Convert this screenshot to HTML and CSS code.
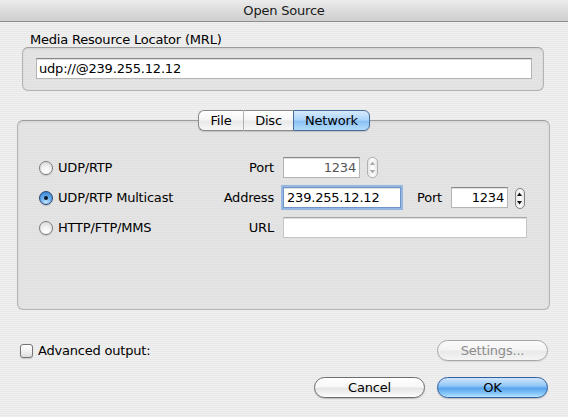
FILE: index.html
```html
<!DOCTYPE html>
<html>
<head>
<meta charset="utf-8">
<title>Open Source</title>
<link rel="stylesheet" href="styles.css">
</head>
<body>
<div class="window">
  <div class="titlebar">Open Source</div>
  <div class="content">
    <div class="mrl-label">Media Resource Locator (MRL)</div>
    <div class="groupbox mrl-box">
      <div class="field mrl-field">udp://@239.255.12.12</div>
    </div>

    <div class="tabview">
      <div class="tabs">
        <span class="tab tab-file">File</span><span class="tab tab-disc">Disc</span><span class="tab tab-net selected">Network</span>
      </div>
      <div class="groupbox tab-box">
        <div class="row">
          <label class="radio-item"><span class="radio"></span>UDP/RTP</label>
          <span class="flabel">Port</span>
          <span class="field num port1 disabled">1234</span>
          <span class="stepper disabled"><svg width="7" height="15" viewBox="0 0 7 15"><path d="M3.5 1.5 L6 5 L1 5 Z"/><path d="M3.5 13.5 L6 10 L1 10 Z"/></svg></span>
        </div>
        <div class="row">
          <label class="radio-item"><span class="radio checked"></span>UDP/RTP Multicast</label>
          <span class="flabel">Address</span>
          <span class="field focused address">239.255.12.12</span>
          <span class="flabel port2-label">Port</span>
          <span class="field num port2">1234</span>
          <span class="stepper"><svg width="7" height="15" viewBox="0 0 7 15"><path d="M3.5 1.5 L6 5 L1 5 Z"/><path d="M3.5 13.5 L6 10 L1 10 Z"/></svg></span>
        </div>
        <div class="row">
          <label class="radio-item"><span class="radio"></span>HTTP/FTP/MMS</label>
          <span class="flabel">URL</span>
          <span class="field url disabled"></span>
        </div>
      </div>
    </div>

    <div class="bottom-row">
      <label class="check-item"><span class="checkbox"></span>Advanced output:</label>
      <span class="button disabled-btn">Settings...</span>
    </div>
    <div class="buttons-row">
      <span class="button">Cancel</span>
      <span class="button default">OK</span>
    </div>
  </div>
</div>
</body>
</html>
```

FILE: styles.css
```css
html, body {
  margin: 0;
  padding: 0;
}
body {
  width: 568px;
  height: 417px;
  overflow: hidden;
  font-family: "DejaVu Sans", "Liberation Sans", sans-serif;
  font-size: 13px;
  letter-spacing: -0.2px;
  color: #000;
}
.window {
  width: 568px;
  height: 417px;
  background: repeating-linear-gradient(180deg, #efefef 0 1px, #e9e9e9 1px 2px);
}
.titlebar {
  height: 21px;
  border-bottom: 1px solid #8e8e8e;
  background: linear-gradient(180deg, #ececec 0%, #dcdcdc 50%, #cfcfcf 100%);
  text-align: center;
  line-height: 22px;
  color: #1a1a1a;
}
.content {
  display: flex;
  flex-direction: column;
}
.mrl-label {
  margin: 10px 0 0 30px;
  height: 15px;
  line-height: 15px;
}
.groupbox {
  border: 1px solid #b3b3b3;
  border-top-color: #9c9c9c;
  border-radius: 6px;
  background: repeating-linear-gradient(180deg, #e5e5e5 0 1px, #e0e0e0 1px 2px);
  box-shadow: inset 0 1px 2px rgba(0,0,0,0.08);
}
.mrl-box {
  margin: 0 24px 0 22px;
  padding: 10px 11px 0 13px;
  box-sizing: border-box;
  height: 44px;
}
.field {
  box-sizing: border-box;
  height: 21px;
  background: #fff;
  border: 1px solid #b4b4b4;
  border-top-color: #888;
  box-shadow: inset 0 1px 0 #dedede;
  line-height: 19px;
  padding: 0 3px;
  white-space: nowrap;
}
.mrl-field {
  padding-left: 2px;
}
.tabview {
  display: flex;
  flex-direction: column;
  margin-top: 19px;
}
.tabs {
  display: flex;
  position: relative;
  z-index: 2;
  height: 21px;
  margin-left: 198px;
  width: 172px;
  box-shadow: 0 1px 1px rgba(0,0,0,0.15);
  border-radius: 6px;
}
.tab {
  box-sizing: border-box;
  height: 21px;
  line-height: 19px;
  text-align: center;
  border: 1px solid #8a8a8a;
  background: linear-gradient(180deg, #ffffff 0%, #f6f6f6 45%, #e9e9e9 55%, #f7f7f7 100%);
}
.tab-file {
  width: 46px;
  border-radius: 6px 0 0 6px;
  border-right: 1px solid #b0b0b0;
}
.tab-disc {
  width: 49px;
  border-left: none;
  border-right: none;
}
.tab-net {
  width: 77px;
  border-radius: 0 6px 6px 0;
}
.tab.selected {
  border-color: #476a9a;
  background: linear-gradient(180deg, #d6eafd 0%, #aed5fa 45%, #8ac2f4 55%, #b4dcfc 100%);
}
.tab-box {
  margin: -11px 18px 0 17px;
  height: 190px;
  box-sizing: border-box;
  padding: 36px 0 0 21px;
  display: flex;
  flex-direction: column;
  gap: 9px;
  position: relative;
  z-index: 1;
}
.row {
  display: flex;
  align-items: center;
  height: 21px;
}
.radio-item {
  width: 170px;
  display: flex;
  align-items: center;
  gap: 5px;
}
.radio {
  width: 14px;
  height: 14px;
  box-sizing: border-box;
  border-radius: 50%;
  border: 1px solid #7d7d7d;
  background: radial-gradient(circle at 50% 80%, #ffffff 0%, #f3f3f3 40%, #d2d2d2 100%);
  box-shadow: 0 1px 1px rgba(0,0,0,0.15);
  position: relative;
}
.radio.checked {
  border-color: #26466f;
  background: radial-gradient(circle at 50% 85%, #c4e4ff 0%, #69aef0 45%, #2f76c8 100%);
}
.radio.checked::after {
  content: "";
  position: absolute;
  left: 4px;
  top: 4px;
  width: 4px;
  height: 4px;
  border-radius: 50%;
  background: #0c1626;
}
.flabel {
  width: 65px;
  text-align: right;
  margin-right: 9px;
}
.num {
  text-align: right;
}
.port1 {
  width: 77px;
  color: #555;
}
.address {
  width: 118px;
}
.focused {
  border-color: #6f94c5;
  box-shadow: 0 0 0 2px #95b8e2, inset 0 1px 0 #e0e0e0;
}
.port2-label {
  width: auto;
  margin-left: 16px;
  margin-right: 9px;
}
.port2 {
  width: 57px;
}
.url {
  width: 244px;
  border-color: #c6c6c6;
  border-top-color: #a8a8a8;
}
.stepper {
  box-sizing: border-box;
  width: 11px;
  height: 21px;
  margin-left: 7px;
  border: 1px solid #828282;
  border-radius: 5px;
  background: linear-gradient(90deg, #e6e6e6 0%, #ffffff 50%, #e6e6e6 100%);
  display: flex;
  align-items: center;
  justify-content: center;
  margin-top: -1px;
}
.stepper svg {
  display: block;
  fill: #111;
}
.stepper.disabled {
  border-color: #b0b0b0;
}
.stepper.disabled svg {
  fill: #a8a8a8;
}
.port2 + .stepper {
  margin-left: 7px;
  width: 10px;
  margin-top: 1px;
}
.bottom-row {
  display: flex;
  justify-content: space-between;
  align-items: center;
  margin-top: 30px;
  padding: 0 20px 0 20px;
  height: 21px;
}
.check-item {
  display: flex;
  align-items: center;
  gap: 5px;
}
.checkbox {
  width: 13px;
  height: 14px;
  box-sizing: border-box;
  border: 1px solid #757575;
  border-radius: 3px;
  background: linear-gradient(180deg, #ffffff 0%, #f2f2f2 50%, #dcdcdc 100%);
  box-shadow: 0 1px 1px rgba(0,0,0,0.15);
}
.buttons-row {
  display: flex;
  justify-content: flex-end;
  gap: 12px;
  margin-top: 16px;
  padding-right: 20px;
}
.button {
  box-sizing: border-box;
  width: 111px;
  height: 21px;
  line-height: 19px;
  text-align: center;
  border: 1px solid #6c6c6c;
  border-radius: 11px;
  background: linear-gradient(180deg, #ffffff 0%, #f7f7f7 45%, #e6e6e6 55%, #f4f4f4 85%, #ffffff 100%);
  box-shadow: 0 1px 1px rgba(0,0,0,0.2);
}
.disabled-btn {
  color: #8c8c8c;
  border-color: #a6a6a6;
  background: linear-gradient(180deg, #fbfbfb 0%, #f4f4f4 45%, #eaeaea 55%, #f4f4f4 100%);
  box-shadow: 0 1px 1px rgba(0,0,0,0.08);
}
.button.default {
  border-color: #2f5f9f;
  background: linear-gradient(180deg, #cfe6fc 0%, #94c8f7 40%, #5aa4ec 55%, #8cccfb 85%, #bfe4ff 100%);
}
```
